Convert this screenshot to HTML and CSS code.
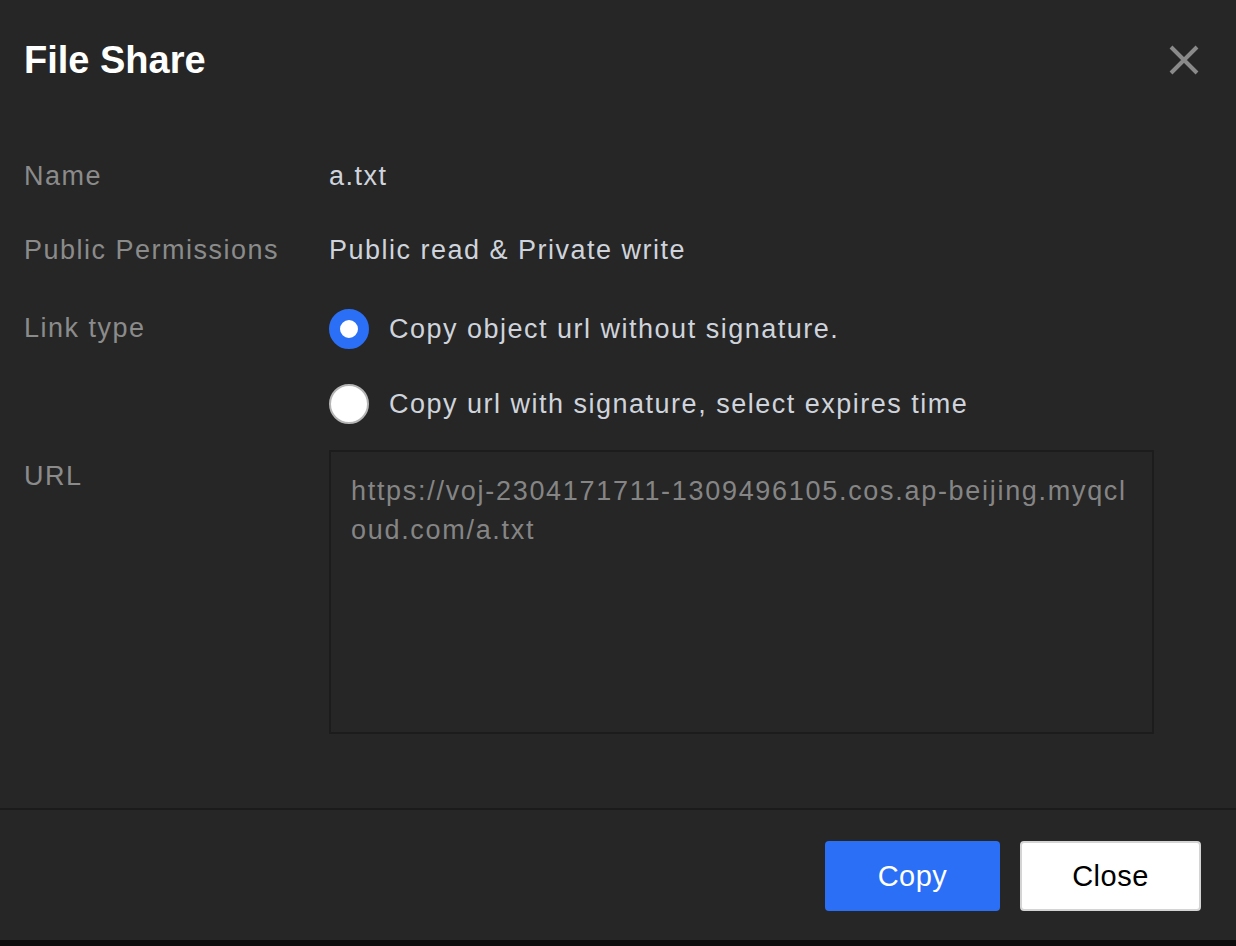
FILE: index.html
```html
<!DOCTYPE html>
<html lang="en">
<head>
<meta charset="utf-8">
<title>File Share</title>
<link rel="stylesheet" href="styles.css">
</head>
<body>
<div class="dialog">
  <div class="header">
    <h1 class="title">File Share</h1>
    <button class="close-x" aria-label="Close">
      <svg width="32" height="32" viewBox="0 0 32 32"><path d="M3 3 L29 29 M29 3 L3 29" stroke="#8a8a8a" stroke-width="4" stroke-linecap="butt" fill="none"/></svg>
    </button>
  </div>
  <div class="body">
    <div class="row row-name">
      <div class="label">Name</div>
      <div class="value">a.txt</div>
    </div>
    <div class="row row-perm">
      <div class="label">Public Permissions</div>
      <div class="value">Public read &amp; Private write</div>
    </div>
    <div class="row row-link">
      <div class="label">Link type</div>
      <div class="radios">
        <label class="radio checked"><span class="dot"></span><span class="rtext">Copy object url without signature.</span></label>
        <label class="radio"><span class="dot"></span><span class="rtext">Copy url with signature, select expires time</span></label>
      </div>
    </div>
    <div class="row row-url">
      <div class="label">URL</div>
      <div class="urlbox">https://voj-2304171711-1309496105.cos.ap-beijing.myqcloud.com/a.txt</div>
    </div>
  </div>
  <div class="footer">
    <button class="btn btn-primary">Copy</button>
    <button class="btn btn-default">Close</button>
  </div>
</div>
</body>
</html>
```
FILE: styles.css
```css
html, body {
  margin: 0;
  padding: 0;
  background: #0d0d0d;
}
body {
  font-family: "Liberation Sans", Arial, Helvetica, sans-serif;
  width: 1236px;
  height: 946px;
  overflow: hidden;
}
.dialog {
  background: #262626;
  height: 940px;
  display: flex;
  flex-direction: column;
}
.header {
  display: flex;
  align-items: center;
  justify-content: space-between;
  padding: 37px 36px 0 24px;
  height: 46px;
}
.title {
  margin: 0;
  font-size: 38px;
  font-weight: bold;
  color: #ffffff;
  line-height: 46px;
}
.close-x {
  background: none;
  border: 0;
  padding: 0;
  width: 32px;
  height: 32px;
  display: flex;
  cursor: pointer;
}
.body {
  padding: 73px 0 74px 24px;
  border-bottom: 2px solid #1b1b1b;
}
.row {
  display: flex;
  font-size: 27px;
  letter-spacing: 1.5px;
  line-height: 40px;
}
.label {
  width: 305px;
  flex: none;
  color: #8b8b8b;
}
.value {
  color: #cfd4dc;
}
.row-perm { margin-top: 34px; }
.row-link { margin-top: 38px; }
.row-url { margin-top: 26px; }
.row-url .label { padding-top: 6px; }
.radios {
  display: flex;
  flex-direction: column;
  gap: 35px;
  margin-top: -18px;
  padding-top: 19px;
}
.radio {
  display: flex;
  align-items: center;
  gap: 20px;
  color: #cfd4dc;
  height: 40px;
}
.dot {
  box-sizing: border-box;
  width: 40px;
  height: 40px;
  border-radius: 50%;
  background: #ffffff;
  border: 2px solid #b5b5b5;
  flex: none;
}
.radio.checked .dot {
  border: 11px solid #2a6ff6;
}
.urlbox {
  box-sizing: border-box;
  width: 825px;
  height: 284px;
  border: 2px solid #1c1c1c;
  padding: 20px 16px 0 20px;
  color: #858585;
  line-height: 39px;
  letter-spacing: 1.7px;
  word-break: break-all;
}
.footer {
  display: flex;
  justify-content: flex-end;
  gap: 20px;
  padding: 31px 35px 0 0;
}
.btn {
  height: 70px;
  font-family: "Liberation Sans", Arial, Helvetica, sans-serif;
  font-size: 29px;
  border-radius: 4px;
  cursor: pointer;
  letter-spacing: 0.5px;
}
.btn-primary {
  width: 175px;
  background: #2a6ff6;
  color: #ffffff;
  border: 0;
}
.btn-default {
  width: 181px;
  background: #ffffff;
  color: #000000;
  border: 2px solid #d4d4d4;
}
```
